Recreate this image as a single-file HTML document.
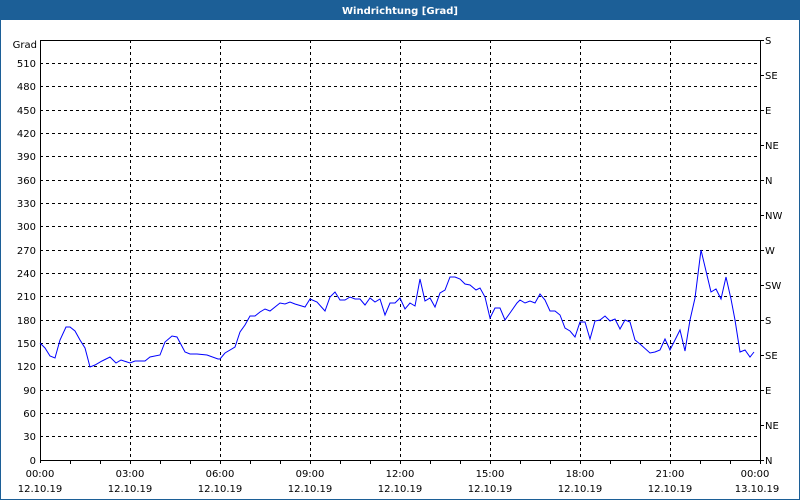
<!DOCTYPE html>
<html><head><meta charset="utf-8"><style>
html,body{margin:0;padding:0;background:#fff;}
svg{display:block;}
text{font-family:"DejaVu Sans","Liberation Sans",sans-serif;font-size:10px;fill:#000;}
</style></head><body>
<svg width="800" height="500" viewBox="0 0 800 500" xmlns="http://www.w3.org/2000/svg">
<rect x="0" y="0" width="800" height="500" fill="#fff"/>
<rect x="0" y="0" width="800" height="20" fill="#1c5f97"/>
<rect x="0" y="0" width="1" height="500" fill="#1c5f97"/>
<rect x="799" y="0" width="1" height="500" fill="#1c5f97"/>
<rect x="0" y="499" width="800" height="1" fill="#1c5f97"/>
<text x="400" y="14" text-anchor="middle" style="fill:#fff;font-weight:bold;font-size:10px">Windrichtung [Grad]</text>
<g stroke="#000" stroke-width="1" stroke-dasharray="3,3" shape-rendering="crispEdges">
<path d="M40 63.5H758M40 86.5H758M40 110.5H758M40 133.5H758M40 156.5H758M40 180.5H758M40 203.5H758M40 226.5H758M40 250.5H758M40 273.5H758M40 296.5H758M40 320.5H758M40 343.5H758M40 366.5H758M40 390.5H758M40 413.5H758M40 436.5H758"/>
<path d="M130.5 40V460M220.5 40V460M310.5 40V460M400.5 40V460M490.5 40V460M580.5 40V460M670.5 40V460"/>
</g>
<g stroke="#000" stroke-width="1" fill="none" shape-rendering="crispEdges">
<path d="M40.5 40.5H760.5M40.5 40V463M40 460.5H760.5M760.5 40V460"/>
<path d="M70.5 460V464M100.5 460V464M130.5 460V464M160.5 460V464M190.5 460V464M220.5 460V464M250.5 460V464M280.5 460V464M310.5 460V464M340.5 460V464M370.5 460V464M400.5 460V464M430.5 460V464M460.5 460V464M490.5 460V464M520.5 460V464M550.5 460V464M580.5 460V464M610.5 460V464M640.5 460V464M670.5 460V464M700.5 460V464M730.5 460V464M760.5 460V464"/>
<path d="M760 40.5H764M760 75.5H764M760 110.5H764M760 145.5H764M760 180.5H764M760 215.5H764M760 250.5H764M760 285.5H764M760 320.5H764M760 355.5H764M760 390.5H764M760 425.5H764M760 460.5H764"/>
</g>
<g text-anchor="end">
<text x="37" y="48">Grad</text>
<text x="36" y="67">510</text><text x="36" y="90">480</text><text x="36" y="114">450</text><text x="36" y="137">420</text><text x="36" y="160">390</text><text x="36" y="184">360</text><text x="36" y="207">330</text><text x="36" y="230">300</text><text x="36" y="254">270</text><text x="36" y="277">240</text><text x="36" y="300">210</text><text x="36" y="324">180</text><text x="36" y="347">150</text><text x="36" y="370">120</text><text x="36" y="394">90</text><text x="36" y="417">60</text><text x="36" y="440">30</text><text x="36" y="464">0</text>
</g>
<g>
<text x="765" y="44">S</text><text x="765" y="79">SE</text><text x="765" y="114">E</text><text x="765" y="149">NE</text><text x="765" y="184">N</text><text x="765" y="219">NW</text><text x="765" y="254">W</text><text x="765" y="289">SW</text><text x="765" y="324">S</text><text x="765" y="359">SE</text><text x="765" y="394">E</text><text x="765" y="429">NE</text><text x="765" y="464">N</text>
</g>
<g text-anchor="middle">
<text x="40" y="477">00:00</text><text x="130" y="477">03:00</text><text x="220" y="477">06:00</text><text x="310" y="477">09:00</text><text x="400" y="477">12:00</text><text x="490" y="477">15:00</text><text x="580" y="477">18:00</text><text x="670" y="477">21:00</text><text x="755" y="477">00:00</text>
<text x="40" y="492">12.10.19</text><text x="130" y="492">12.10.19</text><text x="220" y="492">12.10.19</text><text x="310" y="492">12.10.19</text><text x="400" y="492">12.10.19</text><text x="490" y="492">12.10.19</text><text x="580" y="492">12.10.19</text><text x="670" y="492">12.10.19</text><text x="757" y="492">13.10.19</text>
</g>
<polyline fill="none" stroke="#0000ff" stroke-width="1" points="40,343 45,348 50,356 55,358 60,340 66,327 70,327 75,331 80,340 85,348 90,367 95,365 102,361 110,357 116,363 121,360 130,363 135,361 145,361 150,357 160,355 165,342 172,336 177,337 185,352 190,354 197,354 207,355 218,359 220,359 225,353 235,347 240,332 245,325 250,316 255,316 260,312 265,309 270,311 280,303 285,304 290,302 295,304 305,307 310,299 317,302 325,311 330,297 335,292 340,300 345,300 350,297 355,299 360,299 365,305 370,298 375,302 380,299 385,315 390,303 395,303 400,298 405,309 410,303 415,306 420,279 425,301 430,298 435,307 440,293 445,290 450,277 455,277 460,279 465,284 470,285 476,290 480,288 485,297 490,318 495,308 500,308 505,320 510,313 517,303 520,300 525,303 530,301 535,303 540,294 545,300 550,311 555,311 560,315 565,328 570,331 575,337 580,322 585,322 590,339 595,321 600,320 605,316 610,321 615,319 620,329 625,320 630,322 635,340 640,344 650,353 655,352 660,350 665,339 670,350 680,330 685,351 690,320 695,298 701,250 706,271 711,292 716,289 721,299 726,277 731,299 735,320 740,352 745,350 750,357 754,352"/>
</svg>
</body></html>
